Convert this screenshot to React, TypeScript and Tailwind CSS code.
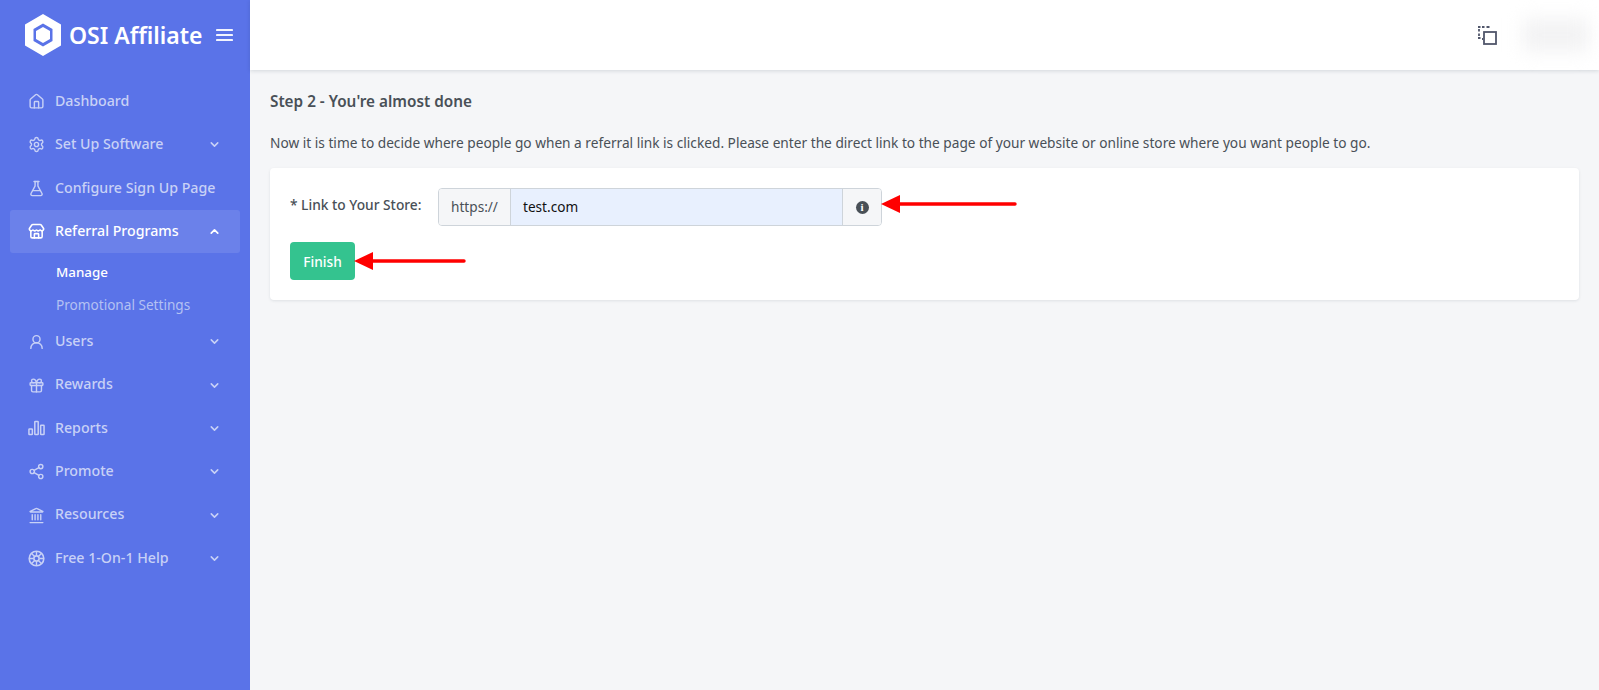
import React from "react";
import { ChevronDown, ChevronUp, FlaskConical, Gift, House, Landmark, Settings, Share2, Store, UserRound } from "lucide-react";

const font = "font-['Noto_Sans','Liberation_Sans',sans-serif]";

const Logo = () => (
  <svg width="38" height="42" viewBox="0 0 38 42" className="shrink-0">
    <path fillRule="evenodd" fill="#fff" d="M19 0 37 10.5V31.5L19 42 1 31.5V10.5ZM19 9.5 9.5 15V27L19 32.5 28.5 27V15Z" />
    <path fill="#fff" d="M19 13 26 17V25L19 29 12 25V17Z" />
  </svg>
);

const Burger = () => (
  <svg width="17" height="14" viewBox="0 0 17 14" fill="none" stroke="#fff" strokeOpacity="0.92" strokeWidth="2.2" strokeLinecap="round" className="ml-[13px]">
    <path d="M1 2H16M1 7H16M1 12H16" />
  </svg>
);

const Bars = () => (
  <svg width="18" height="16" viewBox="0 0 18 16" fill="none" stroke="currentColor" strokeWidth="1.6">
    <rect x="1" y="9" width="3.6" height="6" rx="0.6" />
    <rect x="7.2" y="1" width="3.6" height="14" rx="0.6" />
    <rect x="13.4" y="5" width="3.6" height="10" rx="0.6" />
  </svg>
);

const LifeRing = () => (
  <svg width="17" height="17" viewBox="0 0 17 17" fill="none" stroke="currentColor" strokeWidth="1.6">
    <circle cx="8.5" cy="8.5" r="7.3" />
    <circle cx="8.5" cy="8.5" r="2.6" />
    <path d="M8.5 1.5V5.5M8.5 11.5V15.5M1.5 8.5H5.5M11.5 8.5H15.5M3.6 3.6 6.6 6.6M13.4 3.6 10.4 6.6M3.6 13.4 6.6 10.4M13.4 13.4 10.4 10.4" strokeWidth="1.4" />
  </svg>
);

const NavItem = ({ icon, label, chevron = true, active = false }: { icon: React.ReactNode; label: string; chevron?: boolean; active?: boolean }) => (
  <div className={`mx-[10px] flex h-[43.3px] items-center rounded-[3px] pl-[18px] pr-[19px] text-[14.2px] font-medium ${active ? "bg-white/10 text-white" : "text-[#c8d1f6]"}`}>
    <span className="flex w-[17px] shrink-0 justify-center">{icon}</span>
    <span className="mb-[2px] ml-[10px] flex-1 whitespace-nowrap">{label}</span>
    {chevron && (active ? <ChevronUp size={13} strokeWidth={3.2} /> : <ChevronDown size={13} strokeWidth={2.8} />)}
  </div>
);

const Arrow = ({ width, className }: { width: number; className: string }) => (
  <svg width={width} height="18" viewBox={`0 0 ${width} 18`} className={`absolute ${className}`}>
    <path d="M0 9 19 0V18Z" fill="#ff0000" />
    <path d={`M18 9H${width - 2}`} stroke="#ff0000" strokeWidth="3.4" strokeLinecap="round" />
  </svg>
);

export default function App() {
  return (
    <div className={`flex h-[690px] w-[1599px] overflow-hidden bg-[#f5f6f8] ${font}`}>
      <aside className="flex w-[250px] shrink-0 flex-col bg-[#5a73e8]">
        <div className="flex h-[70px] items-center pl-[24px]">
          <Logo />
          <span className="ml-[7px] whitespace-nowrap text-[23px] font-semibold leading-none text-white">OSI Affiliate</span>
          <Burger />
        </div>
        <nav className="pt-[10px]">
          <NavItem icon={<House size={17} strokeWidth={2} />} label="Dashboard" chevron={false} />
          <NavItem icon={<Settings size={17} strokeWidth={2} />} label="Set Up Software" />
          <NavItem icon={<FlaskConical size={17} strokeWidth={2} />} label="Configure Sign Up Page" chevron={false} />
          <NavItem icon={<Store size={17} strokeWidth={2.2} />} label="Referral Programs" active />
          <div className="flex h-[37px] items-center pl-[56px] text-[13.4px] font-medium text-white">Manage</div>
          <div className="flex h-[30px] items-center pl-[56px] text-[13.6px] text-[#b4c1f3]">Promotional Settings</div>
          <NavItem icon={<UserRound size={18} strokeWidth={2} />} label="Users" />
          <NavItem icon={<Gift size={17} strokeWidth={2} />} label="Rewards" />
          <NavItem icon={<Bars />} label="Reports" />
          <NavItem icon={<Share2 size={17} strokeWidth={2} />} label="Promote" />
          <NavItem icon={<Landmark size={17} strokeWidth={2} />} label="Resources" />
          <NavItem icon={<LifeRing />} label="Free 1-On-1 Help" />
        </nav>
      </aside>
      <div className="flex min-w-0 flex-1 flex-col">
        <header className="relative z-10 flex h-[70px] shrink-0 items-center justify-end bg-white pr-[10px] shadow-[0_1px_4px_rgba(18,38,63,0.15)]">
          <svg width="19" height="19" viewBox="0 0 19 19" fill="none" stroke="#50566a" className="mr-[26px]">
            <rect x="6" y="6" width="12" height="12" strokeWidth="1.8" />
            <path d="M0 1h2.5M4 1h2.5M8.5 1h3M1 3v2.5M1 7.5v2.5M0 12h2.5M4 13h1" strokeWidth="1.8" />
          </svg>
          <div className="h-[34px] w-[66px] bg-[#f3f3f4] blur-[9px]" />
        </header>
        <main className="px-[20px] pt-[21px]">
          <h1 className="text-[15.3px] font-semibold leading-[20px] text-[#495057]">Step 2 - You're almost done</h1>
          <p className="mt-[23px] whitespace-nowrap text-[13.7px] leading-[18px] text-[#495057]">
            Now it is time to decide where people go when a referral link is clicked. Please enter the direct link to the page of your website or online store where you want people to go.
          </p>
          <section className="relative mt-[16px] h-[132px] rounded-[4px] bg-white px-[20px] pt-[20px] shadow-[0_1px_3px_rgba(18,38,63,0.1)]">
            <div className="flex items-start">
              <label className="w-[148px] whitespace-nowrap pt-[7px] text-[13.75px] font-medium text-[#495057]">* Link to Your Store:</label>
              <div className="flex h-[38px] w-[444px] overflow-hidden rounded-[4px] border border-[#ced4da] text-[13.6px]">
                <span className="flex w-[72px] items-center justify-center border-r border-[#ced4da] bg-[#f5f6f8] text-[#495057]">https://</span>
                <span className="flex flex-1 items-center bg-[#e8f0fe] pl-[12px] text-[#111]">test.com</span>
                <span className="flex w-[39px] items-center justify-center border-l border-[#ced4da] bg-[#f5f6f8]">
                  <span className="flex h-[13px] w-[13px] items-center justify-center rounded-full bg-[#495057] font-['Liberation_Serif',serif] text-[11px] font-bold leading-none text-white">i</span>
                </span>
              </div>
            </div>
            <button className="mt-[16px] flex h-[38px] w-[65px] items-center justify-center rounded-[4px] bg-[#34c38f] pt-[2px] text-[13.7px] font-medium text-white">Finish</button>
            <Arrow width={136} className="left-[611px] top-[27px]" />
            <Arrow width={112} className="left-[84px] top-[84px]" />
          </section>
        </main>
      </div>
    </div>
  );
}
